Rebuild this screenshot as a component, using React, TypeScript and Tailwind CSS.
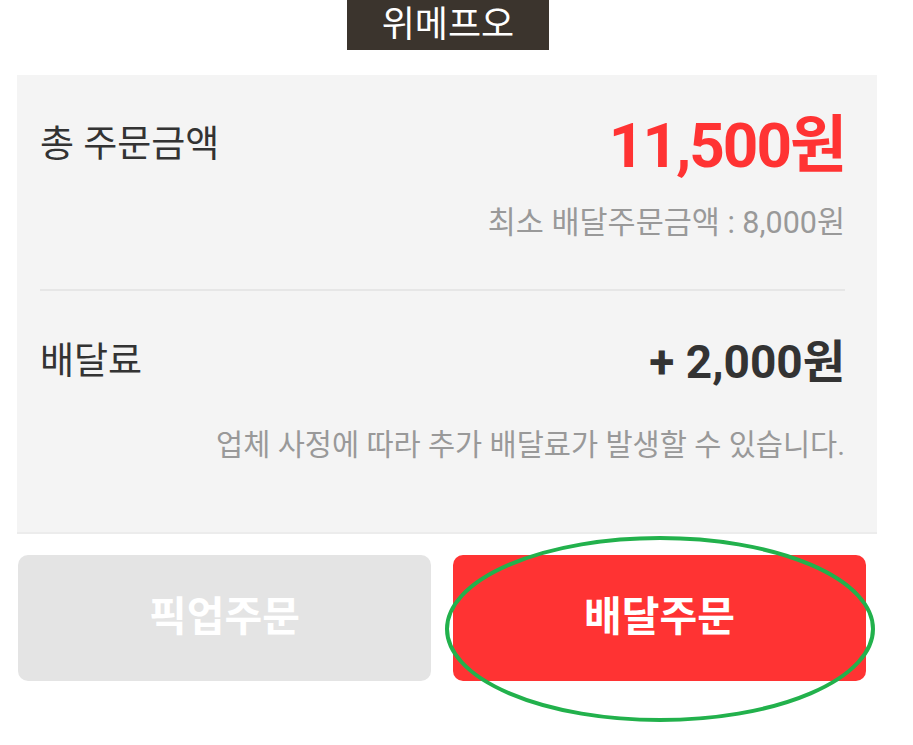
import React from 'react';

const font = { fontFamily: 'Roboto, "Noto Sans CJK KR", sans-serif' };

const App = () => {
    return (
        <div className="relative w-[913px] h-[745px] bg-white overflow-hidden" style={font}>
            {/*상단 라벨*/}
            <div className="flex justify-center">
                <div className="ml-[-17px] w-[202px] h-[50px] bg-[#3b342d] flex items-center justify-center text-white text-[36px] leading-none">
                    위메프오
                </div>
            </div>

            {/*금액 패널*/}
            <div className="mt-[25px] ml-[17px] w-[860px] h-[459px] bg-[#f4f4f4] border-b-2 border-[#ececec] pl-[23px] pr-[32px]">
                <div className="pt-[40px] h-[214px]">
                    <div className="flex justify-between items-center h-[60px]">
                        <span className="text-[37px] text-[#333333]">총 주문금액</span>
                        <span className="text-[62px] font-bold text-[#ff3333] tracking-[-2px]">11,500원</span>
                    </div>
                    <p className="mt-[31px] text-right text-[30.5px] leading-[34px] text-[#999999]">
                        최소 배달주문금액 : 8,000원
                    </p>
                </div>
                <div className="h-[2px] bg-[#e6e6e6]" />
                <div className="pt-[41px]">
                    <div className="flex justify-between items-center h-[60px]">
                        <span className="text-[37px] text-[#333333]">배달료</span>
                        <span className="text-[46px] font-bold text-[#333333]">+ 2,000원</span>
                    </div>
                    <p className="mt-[36px] text-right text-[29.5px] leading-[34px] text-[#999999]">
                        업체 사정에 따라 추가 배달료가 발생할 수 있습니다.
                    </p>
                </div>
            </div>

            {/*주문 버튼*/}
            <div className="mt-[21px] ml-[18px] w-[848px] flex gap-[22px]">
                <button className="flex-1 h-[126px] rounded-[10px] bg-[#e4e4e4] text-white text-[41px] font-bold">
                    픽업주문
                </button>
                <button className="flex-1 h-[126px] rounded-[10px] bg-[#ff3333] text-white text-[41px] font-bold">
                    배달주문
                </button>
            </div>

            {/*강조 표시*/}
            <svg className="absolute left-0 top-0 pointer-events-none" width="913" height="745">
                <ellipse cx="660" cy="629" rx="213" ry="91" fill="none" stroke="#22b14c" strokeWidth="4" />
            </svg>
        </div>
    );
};

export default App;
